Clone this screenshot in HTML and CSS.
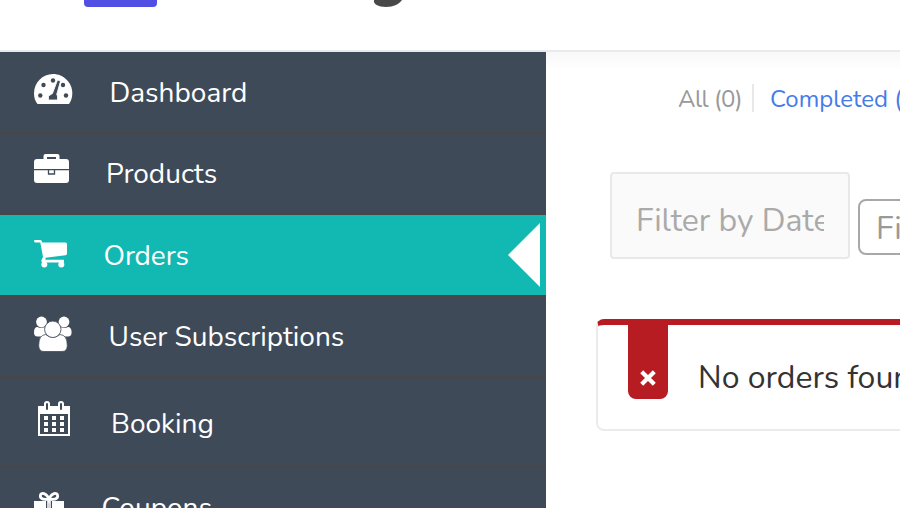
FILE: index.html
```html
<!DOCTYPE html>
<html lang="en">
<head>
<meta charset="utf-8">
<title>Orders</title>
<link rel="stylesheet" href="styles.css">
</head>
<body>
<header class="header">
  <div class="logo-mark"></div>
  <svg class="logo-tail" width="32" height="8" viewBox="0 0 32 8"><path fill="#484848" d="M2 0C1 4 6 7 14 7C22 7 27 4 30 0Z"/></svg>
</header>
<div class="layout">
  <nav class="sidebar">
    <a class="item dashboard">
      <svg class="icon" width="40" height="34" viewBox="0 0 40 34"><path fill="#fff" d="M3.500 31C1.200 28 0 24.500 0 20.500C0 9.500 8.500 1 19 1S38.300 9.500 38.300 20.500C38.300 24.500 37 28 35 31Z"/><g fill="#3f4a59"><circle cx="6.300" cy="22.500" r="2.200"/><circle cx="9.500" cy="12" r="2.200"/><circle cx="19" cy="7.500" r="2.200"/><circle cx="29" cy="12" r="2.200"/><circle cx="32" cy="22.500" r="2.200"/></g><path fill="#3f4a59" stroke="#fff" stroke-width=".8" d="M23.500 7L26.500 8L22.700 21.500L23.500 23V27H14.500V23L18.500 20.500Z"/></svg>
      <span class="label">Dashboard</span>
    </a>
    <a class="item products">
      <svg class="icon" width="36" height="34" viewBox="0 0 36 34"><path fill="#fff" fill-rule="evenodd" d="M3 6H9.500V3Q9.500 1 11.500 1H23.500Q25.500 1 25.500 3V6H32Q35 6 35 9V27Q35 30 32 30H3Q0 30 0 27V9Q0 6 3 6ZM13 4V6H22V4Z"/><path fill="none" stroke="#3f4a59" stroke-width="1.300" d="M0 16.600H35M14.500 16.600V21H20.500V16.600"/></svg>
      <span class="label">Products</span>
    </a>
    <a class="item orders active">
      <svg class="icon" width="34" height="34" viewBox="0 0 34 34"><g fill="#fff"><path d="M1 3H6.500Q8 3 8.300 5.500H31.500Q33 5.500 33 7V16.500Q33 18 31.500 18.200L11.500 20.700V22.700H30V25.500H8.500Q7 25 7.500 23L9 20L6.300 5.500H2Q0 5.500 0 4Q0 3 1 3Z"/><circle cx="10.300" cy="27.500" r="3"/><circle cx="27.300" cy="27.500" r="3"/></g></svg>
      <span class="label">Orders</span>
      <span class="pointer"></span>
    </a>
    <a class="item users">
      <svg class="icon" width="38" height="36" viewBox="0 0 38 36"><g fill="#fff"><circle cx="7.500" cy="6" r="5.400"/><circle cx="30" cy="6" r="5.400"/><path d="M3.500 11Q7 13 11 11Q10 17 14 20L10 20.500H3.500Q0 20.500 0 16.500Q0 11 3.500 11ZM34 11Q30.500 13 26.500 11Q27.500 17 23.500 20L27.500 20.500H34Q37.600 20.500 37.600 16.500Q37.600 11 34 11Z"/><path stroke="#3f4a59" stroke-width=".8" d="M11.500 18.500Q19 24 26 18.500Q33.300 19 33.300 29.500Q33.300 35.500 28 35.500H10Q4.700 35.500 4.700 29.500Q4.700 19 11.500 18.500Z"/><circle stroke="#3f4a59" stroke-width=".8" cx="18.800" cy="13.300" r="8.200"/></g></svg>
      <span class="label">User Subscriptions</span>
    </a>
    <a class="item booking">
      <svg class="icon" width="32" height="36" viewBox="0 0 32 36"><path fill="#fff" fill-rule="evenodd" d="M0 5H6V3Q6 0 9 0T12 3V5H20V3Q20 0 23 0T26 3V5H32V35H0ZM2 13V33H30V13Z"/><path stroke="#3f4a59" stroke-width="2" stroke-linecap="round" d="M9 3V8M23 3V8"/><path fill="#fff" d="M6 15h4v4H6zm8 0h4v4h-4zm8 0h4v4h-4zM6 21h4v4H6zm8 0h4v4h-4zm8 0h4v4h-4zM6 27h4v4H6zm8 0h4v4h-4zm8 0h4v4h-4z"/></svg>
      <span class="label">Booking</span>
    </a>
    <a class="item coupons">
      <svg class="icon" width="30" height="34" viewBox="0 0 30 34"><path fill="#fff" d="M0 10H12V30H2V18H0ZM18 10H30V18H28V30H18Z"/><path fill="#d5d8dc" d="M13 10h4v20h-4z"/><g fill="none" stroke="#fff" stroke-width="2.800"><path d="M15 8.500C13 2 6.500 .5 6.300 5C6.200 8.500 11 8.500 15 8.500C19 8.500 23.800 8.500 23.700 5C23.500 .5 17 2 15 8.500Z"/></g></svg>
      <span class="label">Coupons</span>
    </a>
  </nav>
  <main class="content">
    <div class="tabs"><span class="tab all">All (0)</span><span class="tab completed">Completed (0)</span></div>
    <div class="filters">
      <div class="date"><span class="date-text">Filter by Date</span></div>
      <div class="filter-button">Filter</div>
    </div>
    <div class="notice">
      <div class="flag"><svg width="16" height="16" viewBox="0 0 16 16"><path d="M1.700 1.700L14.300 14.300M14.300 1.700L1.700 14.300" stroke="#fff" stroke-width="4.200"/></svg></div>
      <span class="message">No orders found</span>
    </div>
  </main>
</div>
</body>
</html>
```
FILE: styles.css
```css
* { box-sizing: border-box; }
body {
  margin: 0;
  width: 900px;
  height: 508px;
  overflow: hidden;
  background: #fff;
  font-family: Nunito, "Noto Sans", sans-serif;
  font-weight: 380;
  white-space: nowrap;
}
.header {
  display: flex;
  align-items: flex-start;
  height: 52px;
  padding-left: 84px;
  border-bottom: 2px solid #e9eaeb;
}
.logo-mark { width: 73px; height: 7px; background: #504fe3; border-radius: 0 0 4px 4px; }
.logo-tail { margin-left: 215px; }
.layout { display: flex; height: 456px; }
.sidebar { width: 546px; flex: none; background: #3f4a59; overflow: hidden; }
.item {
  display: flex;
  align-items: flex-start;
  height: 82px;
  padding: 21px 0 0 34px;
  border-bottom: 2px solid #4a4646;
  color: #fff;
}
.icon { flex: none; }
.label { font-size: 28px; line-height: 38px; }
.dashboard .label { margin: 1px 0 0 35.500px; }
.products { height: 81px; padding-top: 19px; }
.products .label { margin: 2px 0 0 36px; }
.orders { height: 82px; padding-top: 22px; }
.orders .label { margin-left: 35.500px; letter-spacing: -0.1px; }
.active { background: #12b8b2; }
.pointer {
  width: 32px;
  height: 64px;
  margin: -14px 6px 0 auto;
  background: #fff;
  clip-path: polygon(100% 0, 100% 100%, 0 50%);
}
.users { height: 81px; padding-top: 19px; }
.users .label { margin: 2px 0 0 36.500px; }
.booking { height: 90px; padding: 23px 0 0 38px; }
.booking .label { margin: 4px 0 0 41px; }
.coupons { height: 90px; padding-top: 23px; }
.coupons .label { margin: -2px 0 0 37.500px; }
.content {
  flex: 1;
  min-width: 0;
  overflow: hidden;
  padding-left: 50px;
  background: linear-gradient(#f8f8f8, #fff 18px);
}
.tabs { display: flex; height: 120px; padding: 32px 0 0 82px; font-size: 24px; line-height: 30px; }
.all { flex: none; width: 76px; height: 28px; border-right: 2px solid #e8e8e8; color: #999; letter-spacing: -0.5px; }
.completed { margin-left: 16px; color: #467bea; }
.filters { display: flex; height: 147px; padding-left: 14px; font-size: 32px; }
.date {
  flex: none;
  width: 240px;
  height: 87px;
  padding: 25px 24px 0;
  border: 2px solid #e9e9e9;
  border-radius: 4px;
  background: #fafafa;
  color: #aaa;
}
.date-text { display: block; height: 44px; line-height: 44px; overflow: hidden; }
.filter-button {
  flex: none;
  width: 120px;
  height: 56px;
  margin: 27px 0 0 8px;
  padding-left: 16px;
  border: 2px solid #a8a8a8;
  border-radius: 8px;
  line-height: 55px;
  color: #999;
}
.notice {
  display: flex;
  width: 400px;
  height: 112px;
  border: 2px solid #ebebeb;
  border-top: 6px solid #b71c22;
  border-radius: 8px;
}
.flag {
  display: flex;
  flex: none;
  justify-content: center;
  align-items: flex-end;
  width: 40px;
  height: 74px;
  margin-left: 30px;
  padding-bottom: 13px;
  border-radius: 0 0 8px 8px;
  background: #b71c22;
}
.message { margin: 31px 0 0 30px; font-size: 32px; line-height: 44px; color: #333; }
```
